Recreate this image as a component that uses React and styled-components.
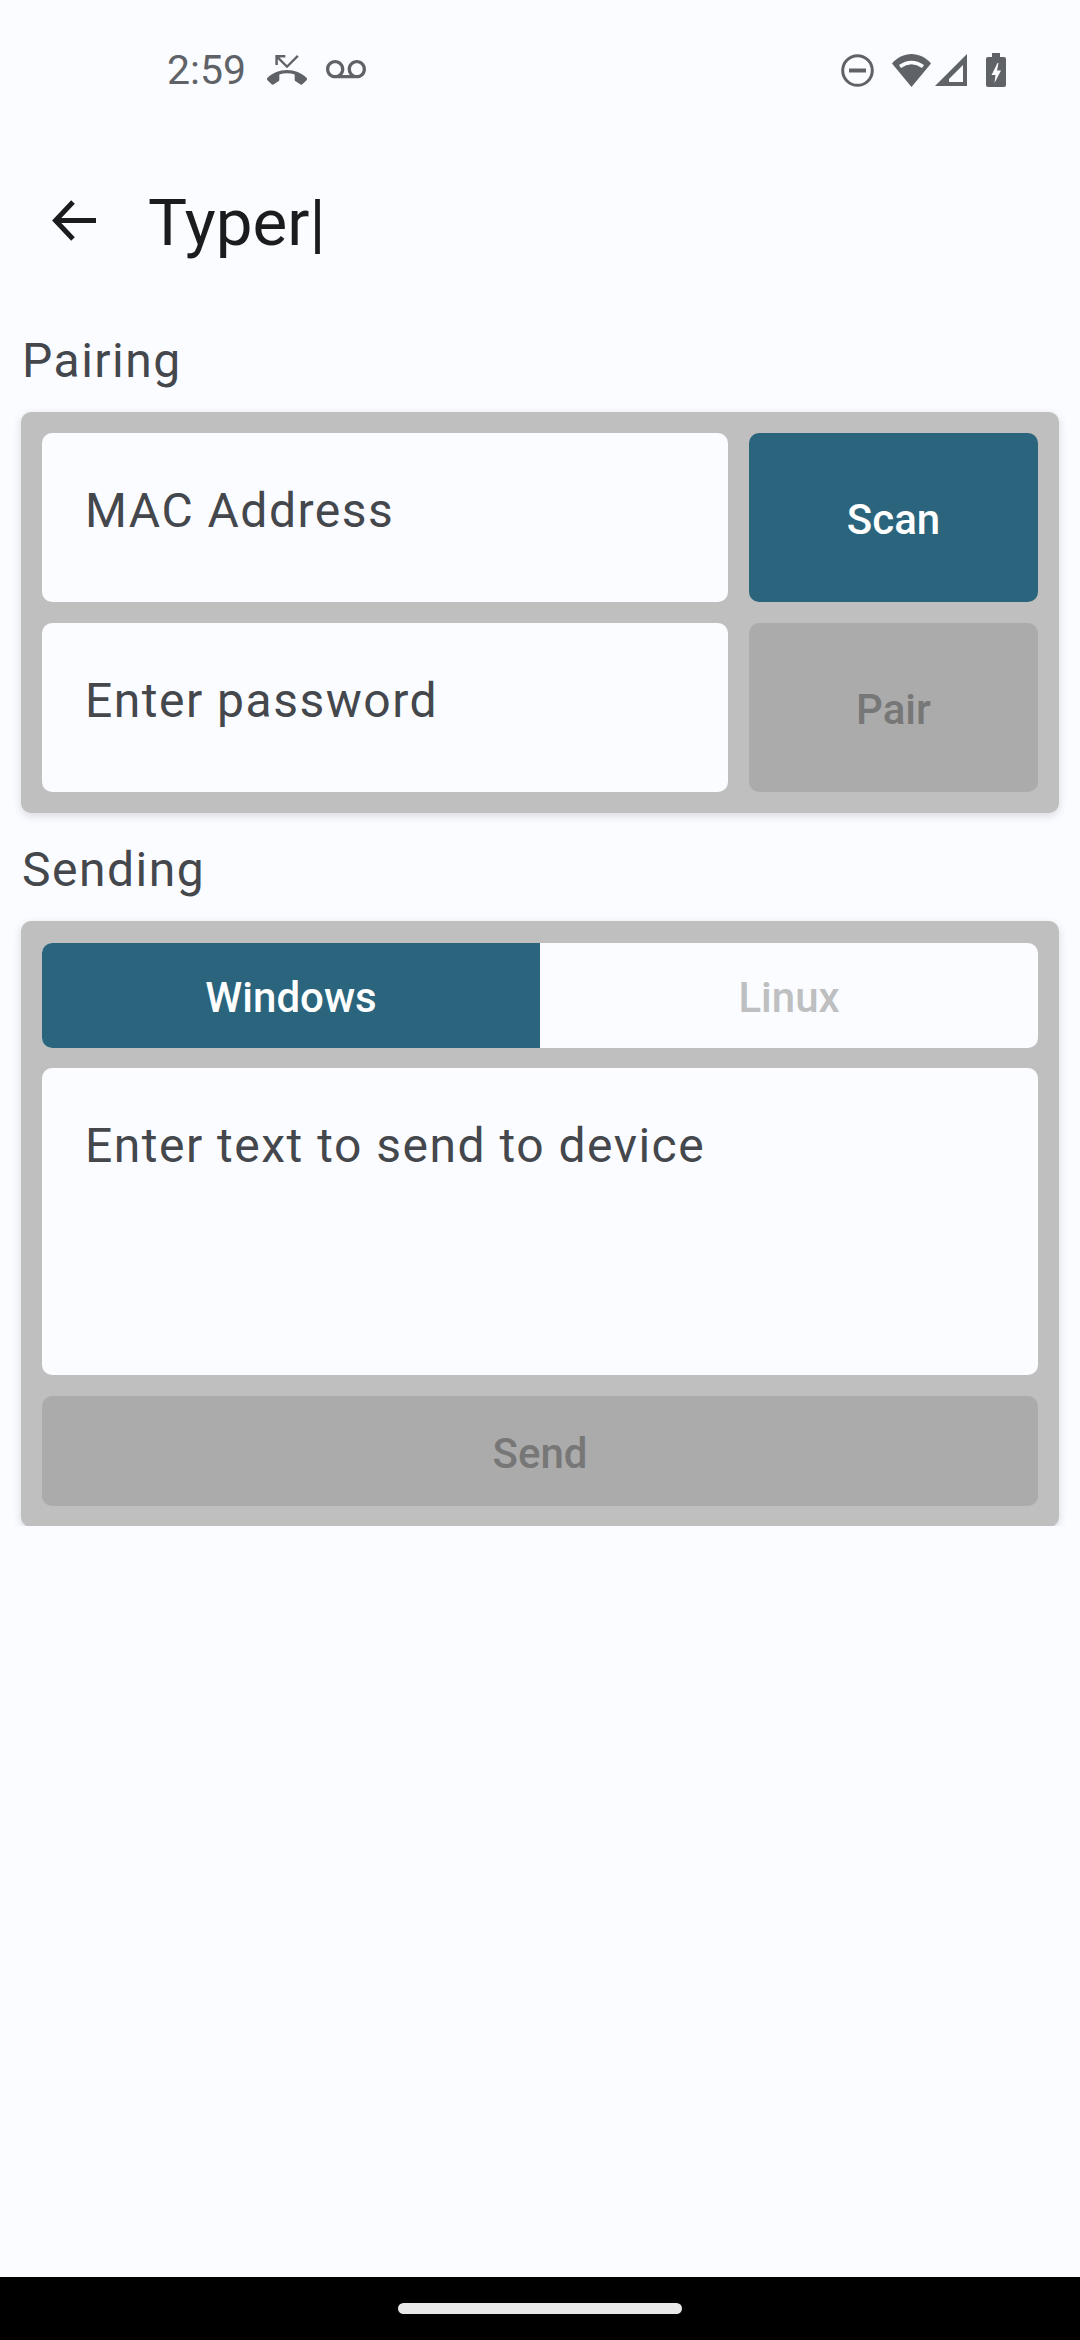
import styled, { createGlobalStyle } from "styled-components"

const Global = createGlobalStyle`
html, body {
  margin: 0;
  padding: 0;
  background: #fbfcff;
}
* { box-sizing: border-box; }
`

const Screen = styled.div`
width: 1080px;
height: 2340px;
display: flex;
flex-direction: column;
background: #fbfcff;
font-family: Roboto, sans-serif;
`

const StatusBar = styled.div`
height: 140px;
flex: none;
display: flex;
align-items: center;
justify-content: space-between;
padding: 0 74px 0 167px;
color: #5f6368;
`

const StatusGroup = styled.div`
display: flex;
align-items: center;
`

const Clock = styled.span`
font-size: 41px;
margin-right: 21px;
`

const AppBar = styled.div`
height: 164px;
flex: none;
display: flex;
align-items: center;
padding: 0 0 0 42px;
`

const BackIcon = styled.svg`
width: 63px;
height: 63px;
flex: none;
margin: 0 43px 3px 0;
`

const Title = styled.h1`
margin: 0;
font-size: 65.5px;
font-weight: 400;
color: #1a1c1e;
`

const Page = styled.main`
flex: none;
height: 1222px;
overflow: hidden;
display: flex;
flex-direction: column;
padding: 0 21px;
`

const Spacer = styled.div`
flex: 1;
`

const SectionLabel = styled.div`
font-size: 48px;
line-height: 60px;
letter-spacing: 1.5px;
color: #44474c;
padding-left: 1px;
height: 108px;
padding-top: 27px;
flex: none;
`

const Card = styled.section`
background: #bfbfbf;
border-radius: 10px;
padding: 21px;
display: flex;
flex-direction: column;
gap: 21px;
box-shadow: 0 3px 10px rgba(0, 0, 0, 0.14);
flex: none;
`

const PairGrid = styled.div`
display: grid;
grid-template-columns: 686px 289px;
grid-auto-rows: 169px;
gap: 21px;
`

const Field = styled.div`
background: #fbfcff;
border-radius: 10px;
height: ${(p) => p.$height || 169}px;
padding: 48px 43px 0;
font-size: 48px;
line-height: 60px;
letter-spacing: 1.5px;
color: #44474c;
`

const ActionButton = styled.button`
border: none;
border-radius: 10px;
font-family: inherit;
font-size: 42px;
font-weight: 500;
padding: 4px 0 0;
height: ${(p) => p.$height || 169}px;
width: 100%;
background: ${(p) => (p.$disabled ? "#ababab" : "#2a657d")};
color: ${(p) => (p.$disabled ? "#777777" : "#ffffff")};
`

const Tabs = styled.div`
height: 105px;
margin: 1px 0 -1px;
display: grid;
grid-template-columns: 1fr 1fr;
background: #fbfcff;
border-radius: 10px;
overflow: hidden;
`

const Tab = styled.div`
display: flex;
align-items: center;
justify-content: center;
padding-top: 3px;
font-size: 42px;
font-weight: 500;
background: ${(p) => (p.$active ? "#2a657d" : "transparent")};
color: ${(p) => (p.$active ? "#ffffff" : "#bdbfc1")};
`

const NavBar = styled.div`
height: 63px;
flex: none;
background: #000000;
display: flex;
justify-content: center;
padding-top: 26px;
`

const HomePill = styled.div`
width: 284px;
height: 11px;
border-radius: 6px;
background: #e8e8e8;
`

const StatusIcon = styled.svg`
display: block;
flex: none;
margin-right: ${(p) => p.$right || 0}px;
`

const App = () => {
  return (
    <Screen>
      <Global />
      <StatusBar>
        <StatusGroup>
          <Clock>2:59</Clock>
          <StatusIcon width="40" height="40" viewBox="0 0 24 24" fill="#5f6368" $right={19}>
            <path d="M6.5 5.5L12 11l7-7-1-1-6 6-4.5-4.5H11V3H5v6h1.5V5.5zm17.21 11.17C20.66 13.78 16.54 12 12 12 7.46 12 3.34 13.78.29 16.67c-.18.18-.29.43-.29.71s.11.53.29.71l2.48 2.48c.18.18.43.29.71.29.27 0 .52-.11.7-.28.79-.74 1.69-1.36 2.66-1.85.33-.16.56-.5.56-.9v-3.1c1.45-.48 3-.73 4.6-.73s3.15.25 4.6.72v3.1c0 .39.23.74.56.9.98.49 1.87 1.12 2.67 1.85.18.18.43.28.7.28.28 0 .53-.11.71-.29l2.48-2.48c.18-.18.29-.43.29-.71s-.12-.52-.3-.7z" />
          </StatusIcon>
          <StatusIcon width="40" height="40" viewBox="0 0 24 24" fill="#5f6368">
            <path d="M18.5 6C15.46 6 13 8.46 13 11.5c0 1.33.47 2.55 1.26 3.5H9.74c.79-.95 1.26-2.17 1.26-3.5C11 8.46 8.54 6 5.5 6S0 8.46 0 11.5 2.46 17 5.5 17h13c3.04 0 5.5-2.46 5.5-5.5S21.54 6 18.5 6zm-13 9C3.57 15 2 13.43 2 11.5S3.57 8 5.5 8 9 9.57 9 11.5 7.43 15 5.5 15zm13 0c-1.93 0-3.5-1.57-3.5-3.5S16.57 8 18.5 8 22 9.57 22 11.5 20.43 15 18.5 15z" />
          </StatusIcon>
        </StatusGroup>
        <StatusGroup>
          <StatusIcon width="33" height="33" viewBox="0 0 33 33" fill="none" stroke="#5f6368" strokeWidth="3" $right={18}>
            <circle cx="16.5" cy="16.5" r="14.8" />
            <path d="M8 16.5h17" strokeWidth="4" />
          </StatusIcon>
          <StatusIcon width="39" height="33" viewBox="0 0 39 33" $right={4}>
            <path d="M0 9.5C5.2 3.5 12 0 19.5 0S33.8 3.5 39 9.5L19.5 33z" fill="#5f6368" />
            <path d="M8 12.5Q19.5 4.5 31 12.5" fill="none" stroke="#fbfcff" strokeWidth="3.5" />
          </StatusIcon>
          <StatusIcon width="32" height="32" viewBox="0 0 32 32" $right={19}>
            <path d="M32 0V32H0z" fill="#5f6368" />
            <path d="M14 28H28V11L14 25z" fill="#fbfcff" />
          </StatusIcon>
          <StatusIcon width="20" height="34" viewBox="0 0 20 34">
            <path d="M6 0h8v4h4a2 2 0 0 1 2 2v26a2 2 0 0 1-2 2H2a2 2 0 0 1-2-2V6a2 2 0 0 1 2-2h4z" fill="#5f6368" />
            <path d="M11.5 10 5.5 22H9.5L8.5 30 15 17.5H11L12.5 10z" fill="#fbfcff" />
          </StatusIcon>
        </StatusGroup>
      </StatusBar>
      <AppBar>
        <BackIcon viewBox="0 0 63 63" fill="none" stroke="#1a1c1e" strokeWidth="5">
          <path d="M54 31.5H14M31 13 13.5 31.5 31 50" />
        </BackIcon>
        <Title>Typer|</Title>
      </AppBar>
      <Page>
        <SectionLabel>Pairing</SectionLabel>
        <Card>
          <PairGrid>
            <Field>MAC Address</Field>
            <ActionButton>Scan</ActionButton>
            <Field>Enter password</Field>
            <ActionButton $disabled>Pair</ActionButton>
          </PairGrid>
        </Card>
        <SectionLabel>Sending</SectionLabel>
        <Card>
          <Tabs>
            <Tab $active>Windows</Tab>
            <Tab>Linux</Tab>
          </Tabs>
          <Field $height={307}>Enter text to send to device</Field>
          <ActionButton $disabled $height={110}>Send</ActionButton>
        </Card>
      </Page>
      <Spacer />
      <NavBar>
        <HomePill />
      </NavBar>
    </Screen>
  )
}

export default App
